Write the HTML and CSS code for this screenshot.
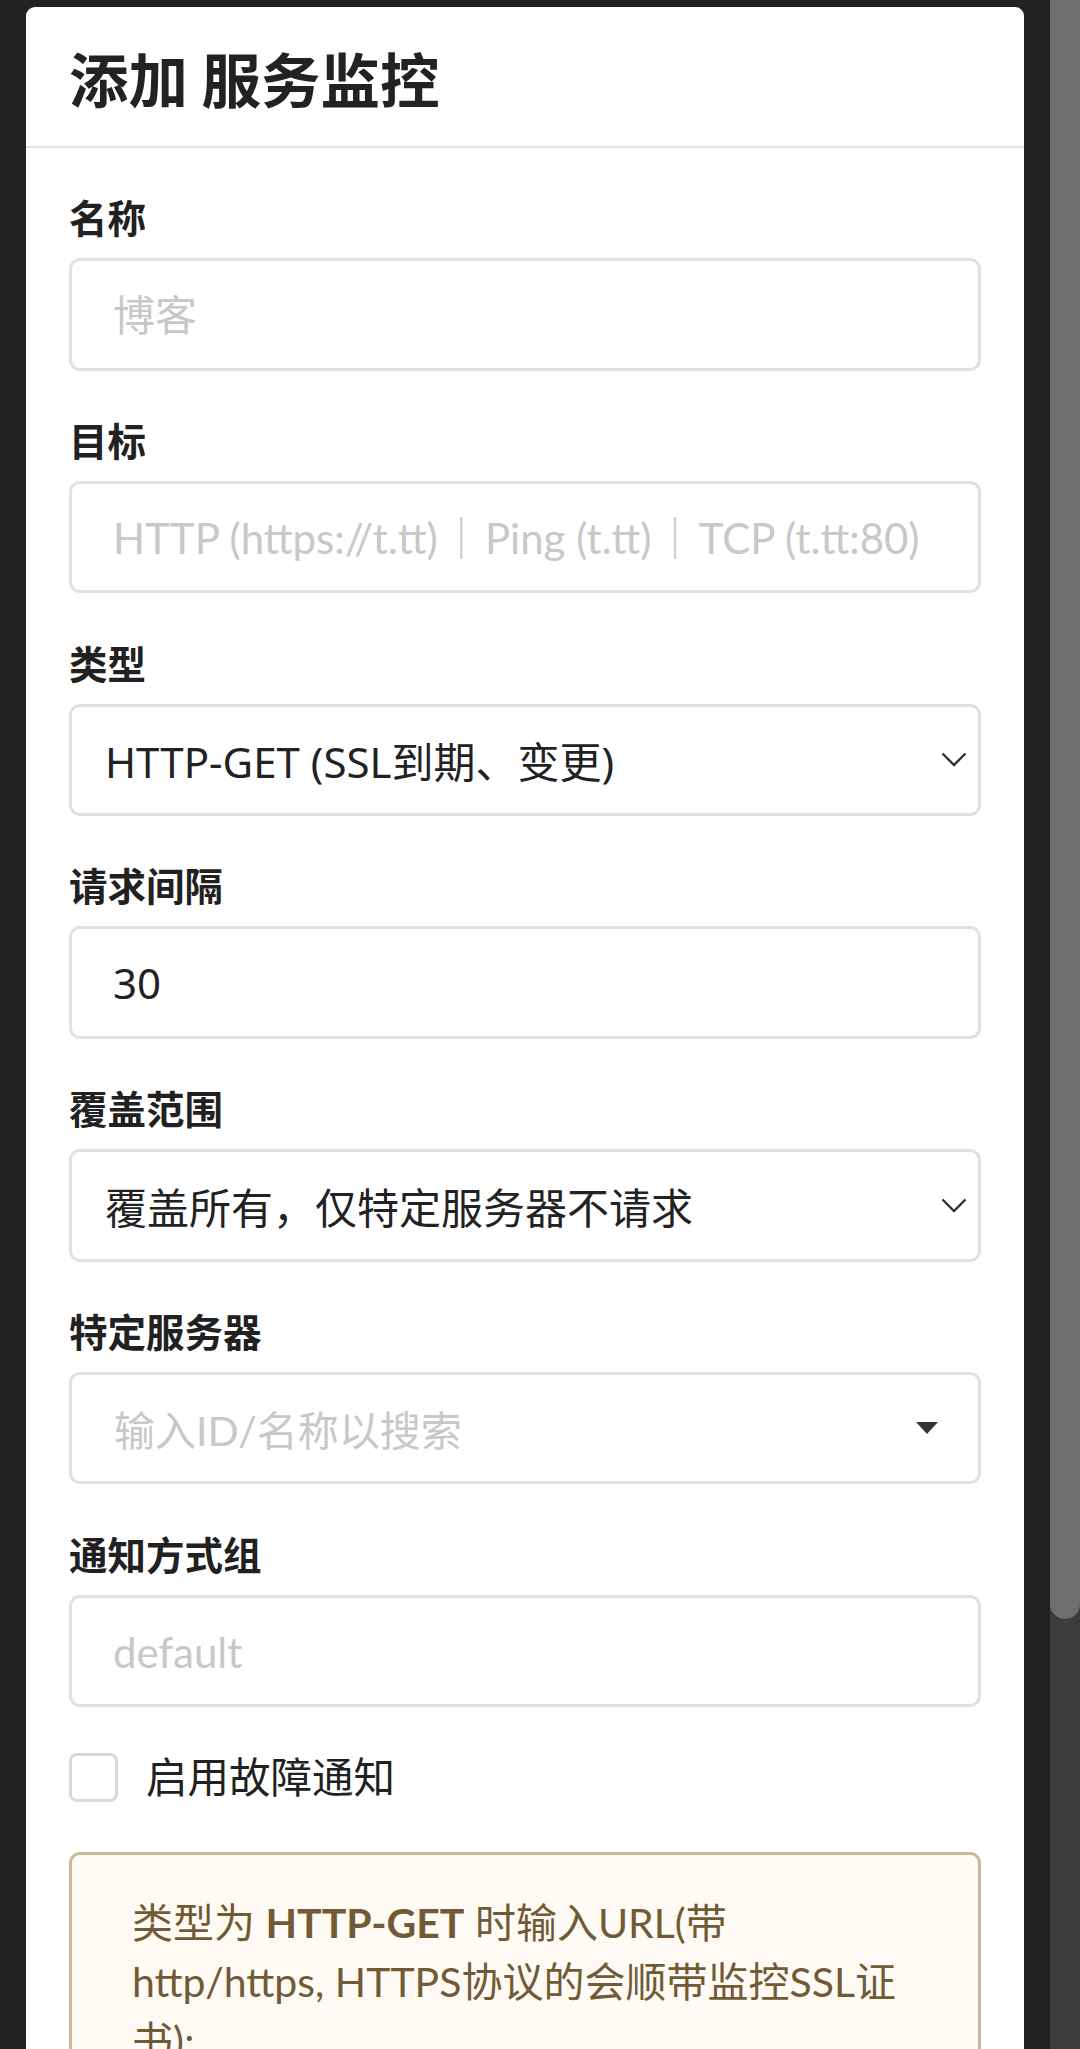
FILE: index.html
```html
<!DOCTYPE html>
<html lang="zh-CN">

<head>
    <meta charset="UTF-8">
    <meta name="viewport" content="width=device-width, initial-scale=1.0">
    <title>添加 服务监控</title>
    <link rel="stylesheet" href="styles.css">
</head>

<body>
    <div class="screen">
        <div class="page">
            <div class="modal">
                <div class="header">添加 服务监控</div>
                <form class="content" action="">
                    <div class="field">
                        <label>名称</label>
                        <input class="box" type="text" placeholder="博客">
                    </div>
                    <div class="field">
                        <label>目标</label>
                        <input class="box" type="text" placeholder="HTTP (https://t.tt)&#8202;｜&#8202;Ping (t.tt)&#8202;｜&#8202;TCP (t.tt:80)">
                    </div>
                    <div class="field">
                        <label>类型</label>
                        <div class="box select">
                            <span>HTTP-GET (SSL到期、变更)</span>
                            <svg class="chevron" width="26" height="15" viewBox="0 0 26 15">
                                <path d="M1.5 1.5 L13 13 L24.5 1.5" fill="none" stroke="#333" stroke-width="2.4"/>
                            </svg>
                        </div>
                    </div>
                    <div class="field">
                        <label>请求间隔</label>
                        <input class="box" type="text" value="30">
                    </div>
                    <div class="field">
                        <label>覆盖范围</label>
                        <div class="box select">
                            <span>覆盖所有，仅特定服务器不请求</span>
                            <svg class="chevron" width="26" height="15" viewBox="0 0 26 15">
                                <path d="M1.5 1.5 L13 13 L24.5 1.5" fill="none" stroke="#333" stroke-width="2.4"/>
                            </svg>
                        </div>
                    </div>
                    <div class="field">
                        <label>特定服务器</label>
                        <div class="box dropdown">
                            <span class="text">输入ID/名称以搜索</span>
                            <svg class="caret" width="22" height="12" viewBox="0 0 22 12">
                                <path d="M0 0 H22 L11 12 Z" fill="#333"/>
                            </svg>
                        </div>
                    </div>
                    <div class="field">
                        <label>通知方式组</label>
                        <input class="box" type="text" placeholder="default">
                    </div>
                    <div class="check">
                        <span class="tick"></span>
                        <span>启用故障通知</span>
                    </div>
                    <div class="message">
                        类型为 <b>HTTP-GET</b> 时输入URL(带 http/https, HTTPS协议的会顺带监控SSL证书);
                    </div>
                </form>
            </div>
        </div>
        <div class="scrollbar">
            <div class="thumb"></div>
        </div>
    </div>
</body>

</html>
```

FILE: styles.css
```css
* {
    margin: 0;
    padding: 0;
    box-sizing: border-box;
}

html,
body {
    height: 2049px;
    overflow: hidden;
}

body {
    background: #222;
    font-family: Lato, "Noto Sans CJK SC", sans-serif;
    color: #212121;
}

.screen {
    display: flex;
    height: 2049px;
}

.page {
    flex: 1;
    padding: 7px 26px 0;
    background: #222;
}

.scrollbar {
    width: 30px;
    background: #3c3c3c;
}

.scrollbar .thumb {
    height: 1619px;
    background: #6e6e6e;
    border-radius: 0 0 15px 15px;
}

.modal {
    background: #fff;
    border-radius: 9px 9px 0 0;
    height: 2042px;
    overflow: hidden;
}

.header {
    display: flex;
    align-items: center;
    height: 141px;
    padding: 0 43px;
    border-bottom: 2px solid #e3e3e3;
    font-family: "Noto Sans CJK SC", sans-serif;
    font-size: 59.5px;
    font-weight: bold;
    color: #222;
}

.content {
    padding: 45px 43px;
}

.field {
    margin-bottom: 45.3px;
}

.field label {
    display: block;
    font-size: 38.5px;
    font-weight: bold;
    line-height: 48px;
    padding-top: 1px;
    margin-bottom: 16px;
    color: #212121;
}

.box {
    display: block;
    width: 100%;
    height: 112.5px;
    border: 3px solid #e1e1e1;
    border-radius: 11px;
    background: #fff;
    outline: none;
}

input.box {
    padding: 0 20px 0 41px;
    font-family: "Noto Sans", "Noto Sans CJK SC", sans-serif;
    font-size: 42px;
    color: #222;
}

input.box::placeholder {
    font-family: Lato, "Noto Sans CJK SC", sans-serif;
    font-size: 42px;
    color: #c8c8c8;
}

.select {
    display: flex;
    align-items: center;
    justify-content: space-between;
    padding: 0 11px 0 33px;
    font-family: "Noto Sans", "Noto Sans CJK SC", sans-serif;
    font-size: 42px;
    color: #222;
}

.dropdown {
    display: flex;
    align-items: center;
    justify-content: space-between;
    padding: 0 40px 0 42px;
}

.dropdown .text {
    font-size: 41px;
    color: #c8c8c8;
}

.check {
    display: flex;
    align-items: center;
    gap: 28px;
    height: 49px;
    line-height: 49px;
    font-size: 41.5px;
}

.check .tick {
    width: 49px;
    height: 49px;
    border: 3px solid #d9d9d9;
    border-radius: 8px;
}

.message {
    margin-top: 50px;
    padding: 38px 58px 38px 60px;
    background: #fffaf3;
    border: 3px solid #c9ba9b;
    border-radius: 11px;
    font-size: 41px;
    line-height: 59px;
    color: #715a36;
}

.message b {
    font-weight: bold;
}
```
